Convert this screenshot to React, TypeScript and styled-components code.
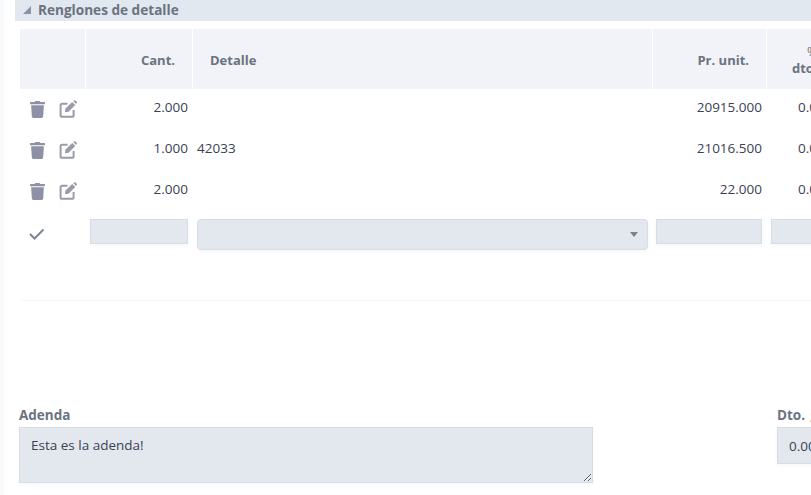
import styled, { createGlobalStyle } from "styled-components";
import { FaTrash } from "react-icons/fa";

const GlobalStyle = createGlobalStyle`
    html, body {
        margin: 0;
        padding: 0;
        height: 495px;
        overflow: hidden;
        background: #fff;
    }
    body {
        font-family: "Open Sans", "Liberation Sans", sans-serif;
        font-size: 13.5px;
        color: #3a4253;
    }
`;

const Page = styled.div`
    width: 1100px;
    height: 495px;
    border-left: 4px solid #f8f9fb;
    box-sizing: border-box;
    padding-left: 11px;
    overflow: hidden;
`;

const SectionTitle = styled.div`
    height: 21px;
    background: #e2e8f0;
    display: flex;
    align-items: center;
    gap: 7px;
    padding: 0 0 2px 8px;
    box-sizing: border-box;
    font-size: 13.6px;
    font-weight: 700;
    color: #6b7280;
    line-height: 17px;
`;

const Caret = styled.span`
    width: 0;
    height: 0;
    border-style: solid;
    border-width: 0 0 8px 8px;
    border-color: transparent transparent #8e90a6 transparent;
`;

const Grid = styled.div`
    margin: 8px 0 0 5px;
    display: grid;
    grid-template-columns: 65px 106px 459px 113px 88px;
    column-gap: 1px;
    border-bottom: 1px solid #f6f7f9;
    padding-bottom: 47px;
`;

const HeadCell = styled.div<{ $align: "left" | "right" }>`
    height: 60px;
    background: #f1f3f8;
    font-size: 13px;
    font-weight: 700;
    line-height: 17px;
    color: #6b7280;
    display: flex;
    flex-direction: column;
    justify-content: center;
    text-align: ${p => p.$align};
    padding: 2px ${p => (p.$align === "right" ? "17px" : "0")} 0 ${p => (p.$align === "left" ? "17px" : "0")};
    box-sizing: border-box;
`;

const DiscountHead = styled(HeadCell)`
    padding-left: 25px;
`;

const Percent = styled.span`
    font-weight: 400;
    padding-left: 15px;
`;

const ActionCell = styled.div`
    height: 41px;
    display: flex;
    align-items: flex-start;
    gap: 13px;
    padding: 12px 0 0 9px;
    box-sizing: border-box;
    color: #8e90a6;
    font-size: 17px;
`;

const EditSvg = styled.svg`
    width: 18px;
    height: 18px;
    color: #9a9ba8;
    margin-top: -1px;
`;

const EditIcon = () => <EditSvg viewBox="0 0 18 18">
    <path
        d="M8.5 3.8H3.2a1.6 1.6 0 0 0-1.6 1.6v9.8a1.6 1.6 0 0 0 1.6 1.6H13a1.6 1.6 0 0 0 1.6-1.6V10"
        fill="none"
        stroke="currentColor"
        strokeWidth="2"
    />
    <path d="M13.2 1.9 16.3 5 9.6 11.7 5.9 12.3 6.5 8.6Z" fill="currentColor" />
    <path d="M14.2 1 15 .4a1.2 1.2 0 0 1 1.5.1l1.1 1.1a1.2 1.2 0 0 1 0 1.6l-.6.7Z" fill="currentColor" />
</EditSvg>;

const ValueCell = styled.div<{ $align: "left" | "right" }>`
    height: 41px;
    padding: 9px 4px 0 4px;
    box-sizing: border-box;
    text-align: ${p => p.$align};
    line-height: 18px;
    white-space: nowrap;
    overflow: hidden;
`;

const DiscountCell = styled(ValueCell)`
    padding-left: 31px;
`;

const InputCell = styled.div<{ $left?: number }>`
    height: 41px;
    padding: 7px 4px 0 ${p => p.$left ?? 4}px;
    box-sizing: border-box;
`;

const CheckCell = styled.div`
    height: 41px;
    padding: 2px 0 0 8px;
    box-sizing: border-box;
    display: flex;
    align-items: center;
    color: #7f8591;
`;

const Field = styled.div`
    height: 25px;
    box-sizing: border-box;
    background: #e2e8ee;
    border: 1px solid #d6dde5;
    box-shadow: 0 2px 4px rgba(140, 150, 170, 0.08);
`;

const SelectField = styled(Field)`
    height: 31px;
    border-radius: 4px;
    display: flex;
    align-items: center;
    justify-content: flex-end;
    padding-right: 9px;
    &::after {
        content: "";
        border-style: solid;
        border-width: 5px 4px 0 4px;
        border-color: #7d7f8e transparent transparent transparent;
    }
`;

const Bottom = styled.div`
    margin: 105px 0 0 4px;
    display: flex;
    gap: 184px;
`;

const Column = styled.div<{ $width: number }>`
    width: ${p => p.$width}px;
    display: flex;
    flex-direction: column;
`;

const Label = styled.label`
    font-size: 13.5px;
    font-weight: 700;
    color: #6b7280;
    line-height: 18px;
    margin-bottom: 3px;
    white-space: nowrap;
    word-spacing: 2px;
`;

const TextArea = styled.textarea`
    width: 574px;
    height: 56px;
    box-sizing: border-box;
    background: #e2e8ee;
    border: 1px solid #d6dde5;
    box-shadow: 0 2px 4px rgba(140, 150, 170, 0.08);
    padding: 8px 11px;
    margin: 0;
    font: inherit;
    line-height: 18px;
    color: #3a4253;
    outline: none;
`;

const AmountBox = styled.div`
    height: 37px;
    box-sizing: border-box;
    background: #e2e8ee;
    border: 1px solid #d6dde5;
    box-shadow: 0 2px 4px rgba(140, 150, 170, 0.08);
    padding: 9px 11px;
    line-height: 18px;
`;

const rows = [
    { qty: "2.000", detail: "", price: "20915.000", discount: "0.00" },
    { qty: "1.000", detail: "42033", price: "21016.500", discount: "0.00" },
    { qty: "2.000", detail: "", price: "22.000", discount: "0.00" },
];

export default function App() {
    return <Page>
        <GlobalStyle />
        <SectionTitle><Caret />Renglones de detalle</SectionTitle>
        <Grid>
            <HeadCell $align="left" />
            <HeadCell $align="right">Cant.</HeadCell>
            <HeadCell $align="left">Detalle</HeadCell>
            <HeadCell $align="right">Pr. unit.</HeadCell>
            <DiscountHead $align="left"><Percent>%</Percent>dto.</DiscountHead>
            {rows.flatMap((row, index) => [
                <ActionCell key={`actions-${index}`}><FaTrash /><EditIcon /></ActionCell>,
                <ValueCell key={`qty-${index}`} $align="right">{row.qty}</ValueCell>,
                <ValueCell key={`detail-${index}`} $align="left">{row.detail}</ValueCell>,
                <ValueCell key={`price-${index}`} $align="right">{row.price}</ValueCell>,
                <DiscountCell key={`discount-${index}`} $align="left">{row.discount}</DiscountCell>,
            ])}
            <CheckCell>
                <svg width="18" height="18" viewBox="0 0 18 18" fill="none" stroke="currentColor" strokeWidth="2">
                    <polyline points="2,9 6.5,13.5 15.5,4.5" />
                </svg>
            </CheckCell>
            <InputCell><Field /></InputCell>
            <InputCell><SelectField /></InputCell>
            <InputCell $left={3}><Field /></InputCell>
            <InputCell><Field /></InputCell>
        </Grid>
        <Bottom>
            <Column $width={574}>
                <Label>Adenda</Label>
                <TextArea defaultValue="Esta es la adenda!" />
            </Column>
            <Column $width={120}>
                <Label>Dto. global</Label>
                <AmountBox>0.00</AmountBox>
            </Column>
        </Bottom>
    </Page>;
}
